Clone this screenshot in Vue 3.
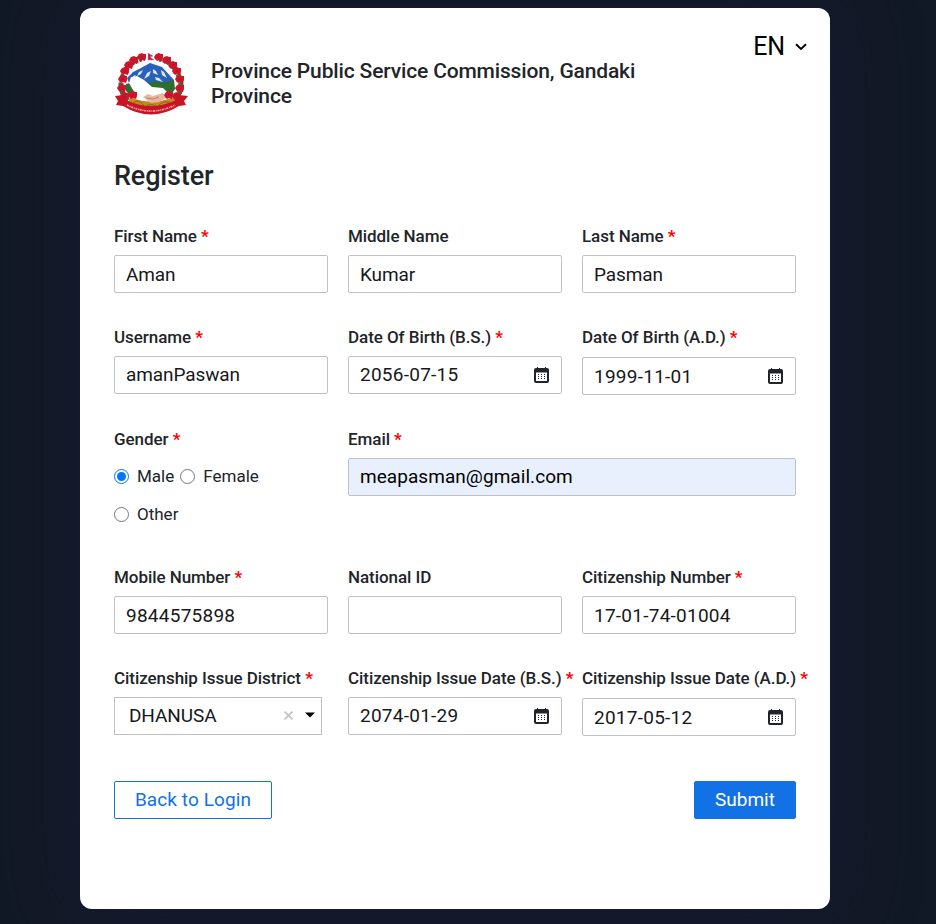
<script setup>
import { ref } from 'vue'

const gender = ref('Male')
const fields = [
  { label: 'First Name', required: true, value: 'Aman' },
  { label: 'Middle Name', value: 'Kumar' },
  { label: 'Last Name', required: true, value: 'Pasman' },
  { label: 'Username', required: true, value: 'amanPaswan', raised: true },
  { label: 'Date Of Birth (B.S.)', required: true, value: '2056-07-15', type: 'date', raised: true },
  { label: 'Date Of Birth (A.D.)', required: true, value: '1999-11-01', type: 'date', low: true },
  { label: 'Gender', required: true, type: 'radio' },
  { label: 'Email', required: true, value: 'meapasman@gmail.com', type: 'email', raised: true },
  { label: 'Mobile Number', required: true, value: '9844575898' },
  { label: 'National ID', value: '' },
  { label: 'Citizenship Number', required: true, value: '17-01-74-01004' },
  { label: 'Citizenship Issue District', required: true, value: 'DHANUSA', type: 'select' },
  { label: 'Citizenship Issue Date (B.S.)', required: true, value: '2074-01-29', type: 'date', raised: true },
  { label: 'Citizenship Issue Date (A.D.)', required: true, value: '2017-05-12', type: 'date', low: true },
]

const isNumeric = (value) => /^\d/.test(value)

// Rhododendron blossoms around the emblem
const blossoms = [
  [28, 5], [20, 8], [15, 13], [11, 19], [9, 27], [8, 36], [11, 44], [19, 43],
  [45, 5], [53, 8], [59, 13], [63, 19], [66, 27], [66, 36], [63, 44], [55, 43],
]
</script>

<template>
  <div class="page">
    <main class="card">
      <header class="head">
        <svg class="emblem" viewBox="0 0 74 64">
          <path d="M28 7C16 9 8 20 7 32C7 40 10 47 18 51M45 7C58 9 65 20 67 32C67 40 64 47 56 51" fill="none" stroke="#2c7138" stroke-width="5" stroke-dasharray="3 1.2" />
          <path d="M13 26L19 20L27 16L36 11L42 13L48 15L60 28L58 31H15Z" fill="#2860bc" />
          <path d="M25 20l4-2-2 4-4 2zM39 17l3 2 2 4-5-2zM47 18l3 2 3 6-5-3zM33 21l4-2-2 5-5 3zM41 25l4 1 4 4-7-2zM19 24l3-1-2 3z" fill="#dce8f7" />
          <path d="M12 32L20 30L34 31L42 29L48 31L60 28L61 37L57 43H16L12 39Z" fill="#2d6d2e" />
          <path d="M17 25L23 24L30 28L38 35L49 36L53 40L51 46L36 48L25 45L19 38L15 31Z" fill="#fff" />
          <path d="M16 45Q37 54 60 45L62 54Q37 62 13 54Z" fill="#c28b1d" />
          <path d="M19 51q6-5 11 3M31 55q6-5 12 0M45 53q5-5 11-2" fill="none" stroke="#8d641b" />
          <path d="M29 45L34 42L39 44L49 41L52 46L45 50L37 51Z" fill="#e9b7a0" />
          <path d="M32 46l7 1 6-2" fill="none" stroke="#ae705f" stroke-width=".8" />
          <g v-for="([x, y], i) in blossoms" :key="i">
            <path :transform="`translate(${x} ${y})`" d="M0-4L2-3 4-3 4 1 3 4 0 3-2 4-4 2-5 0-3-3Z" fill="#cf142b" />
            <circle :cx="x" :cy="y" r=".8" fill="#96152a" />
          </g>
          <path d="M34 1L39 4L36 5L40 8H34Z" fill="#d31d3d" stroke="#7682b6" stroke-width=".4" />
          <path d="M1 44L9 43L14 49Q37 59 60 49L65 43L74 44L70 49L72 53L65 54Q37 71 9 54L2 53L4 49Z" fill="#c91425" />
          <path d="M13 53Q37 65 61 53" fill="none" stroke="#f1a6a5" stroke-width="1.7" stroke-dasharray="2 .8 1 .7" />
        </svg>
        <h1>Province Public Service Commission, Gandaki Province</h1>
        <button class="lang">
          <span>EN</span>
          <svg viewBox="0 0 12 8"><path d="M1 1.3L6 6L11 1.3" fill="none" stroke="currentColor" stroke-width="1.9" /></svg>
        </button>
      </header>

      <h2>Register</h2>

      <form class="grid" @submit.prevent>
        <div v-for="f in fields" :key="f.label" class="field" :class="{ wide: f.type === 'email' }">
          <div class="label">{{ f.label }}<span v-if="f.required" class="star"> *</span></div>

          <div v-if="f.type === 'radio'" class="radios">
            <label v-for="g in ['Male', 'Female', 'Other']" :key="g" class="radio">
              <input v-model="gender" type="radio" name="gender" :value="g"><span>{{ g }}</span>
            </label>
          </div>

          <div v-else-if="f.type === 'select'" class="box select raised">
            <span class="value">{{ f.value }}</span>
            <svg class="clear" viewBox="0 0 8 8"><path d="M.5.5L7.5 7.5M7.5.5L.5 7.5" stroke="currentColor" stroke-width="1.7" /></svg>
            <svg class="caret" viewBox="0 0 10 6"><path d="M0 .5H10L5 5.5Z" fill="#000" /></svg>
          </div>

          <div v-else class="box" :class="{ filled: f.type === 'email', low: f.low, raised: f.raised, numeric: isNumeric(f.value) }">
            <span class="value">{{ f.value }}</span>
            <svg v-if="f.type === 'date'" class="calendar" viewBox="0 0 15 16">
              <path d="M2 1H3V0H4V1H11V0H12V1H13Q15 1 15 3V14Q15 16 13 16H2Q0 16 0 14V3Q0 1 2 1ZM2 5.5V14H13V5.5Z" fill="#212529" fill-rule="evenodd" />
              <path d="M4 7h1v1H4zM7 7h1v1H7zM10 7h1v1h-1zM4 9h1v1H4zM7 9h1v1H7zM10 9h1v1h-1zM4 11h1v1H4zM7 11h1v1H7zM10 11h1v1h-1z" fill="#212529" />
            </svg>
          </div>
        </div>
      </form>

      <div class="actions">
        <button class="btn outline">Back to Login</button>
        <button class="btn solid">Submit</button>
      </div>
    </main>
  </div>
</template>

<style>
body { background: #121926; }
</style>

<style scoped>
* { box-sizing: border-box; }
.page {
  height: 924px;
  padding: 8px 0 0 80px;
  overflow: hidden;
  background: #121926;
  color: #212529;
  font-family: Roboto, sans-serif;
}
.card {
  width: 750px;
  height: 901px;
  padding: 0 34px;
  border-radius: 12px;
  background: #fff;
  box-shadow: 0 0 80px #171c33;
}
.head { display: flex; height: 151px; }
.emblem { width: 74px; height: 64px; margin: 44px 0 0; flex: none; }
h1 {
  width: 450px;
  margin: 51px 0 0 23px;
  font-size: 21px;
  font-weight: 500;
  line-height: 25px;
  letter-spacing: -0.15px;
}
.lang {
  display: flex;
  align-items: center;
  gap: 10px;
  height: 30px;
  margin: 24px -11px 0 auto;
  padding: 0;
  border: 0;
  background: none;
  color: #000;
  font: 25px/30px Roboto, sans-serif;
  letter-spacing: -0.2px;
}
.lang svg { width: 12px; height: 8px; }
h2 { height: 34px; margin: 0; font-size: 27px; font-weight: 500; line-height: 34px; letter-spacing: -0.15px; }
.grid {
  display: grid;
  grid-template-columns: repeat(3, 214px);
  grid-template-rows: 101px 102px 138px 101px 70px;
  column-gap: 20px;
  margin-top: 31px;
}
.field { min-width: 0; }
.wide { grid-column: span 2; }
.label { height: 24px; margin-bottom: 7px; font-size: 17px; font-weight: 500; line-height: 25px; letter-spacing: -0.06px; white-space: nowrap; }
.star { color: red; font-weight: 700; }
.box {
  display: flex;
  align-items: center;
  height: 38px;
  padding: 0 12px 0 11px;
  border: 1px solid #bfc1c4;
  border-radius: 2px;
  background: #fff;
  color: #16181b;
  font-size: 19px;
  letter-spacing: -0.1px;
  white-space: nowrap;
}
.numeric { letter-spacing: 0.25px; }
.raised .value { padding-bottom: 2px; }
.low { margin-top: 8px; }
.filled { background: #e8f0fe; color: #000; letter-spacing: 0.05px; }
.calendar { width: 15px; height: 16px; margin-left: auto; }
.select { width: 208px; padding: 0 6px 0 14px; border-radius: 0; }
.clear { width: 9px; height: 9px; margin: 0 0 2px auto; color: #c5c5c5; }
.caret { width: 10px; height: 6px; margin: 0 0 2px 12px; }
.radios { display: flex; flex-wrap: wrap; column-gap: 6px; margin-top: -1px; }
.radio { display: flex; align-items: center; height: 38px; font-size: 17px; }
.radio input { width: 15px; height: 15px; margin: 0 8px 0 0; }
.actions { display: flex; justify-content: space-between; margin-top: 45px; }
.btn { height: 38px; padding: 0; border: 1px solid #1171e5; border-radius: 2px; font: 19px/34px Roboto, sans-serif; }
.outline { width: 158px; background: #fff; color: #1171e5; letter-spacing: 0.1px; }
.solid { width: 102px; background: #1171e5; color: #fff; }
</style>
